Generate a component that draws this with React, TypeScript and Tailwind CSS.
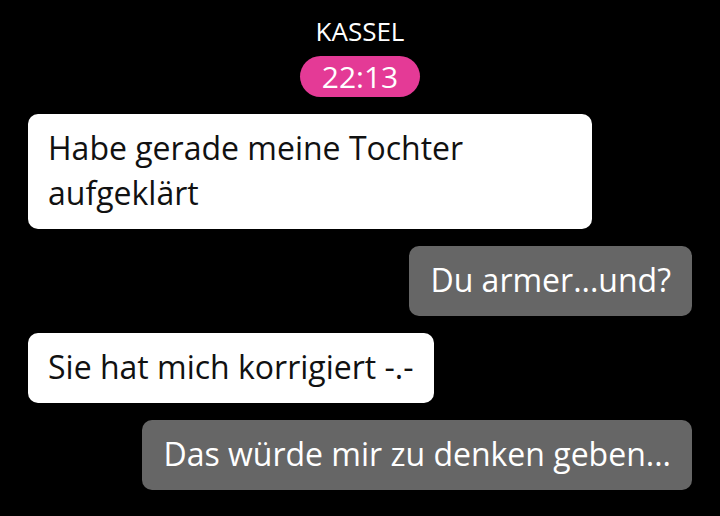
const messages = [
  { text: 'Habe gerade meine Tochter aufgeklärt', mine: false },
  { text: 'Du armer...und?', mine: true },
  { text: 'Sie hat mich korrigiert -.-', mine: false },
  { text: 'Das würde mir zu denken geben...', mine: true },
];

export default function App() {
  return (
    <div className="min-h-[516px] w-[720px] bg-black font-['Open_Sans',sans-serif] text-white">
      <div className="flex flex-col items-center pt-[15px]">
        <div className="text-[26px] leading-[32px]">KASSEL</div>
        <div className="mt-[9px] rounded-full bg-[#e43a96] px-[22px] text-[30px] leading-[41px]">22:13</div>
      </div>
      <div className="mt-[17px] flex flex-col gap-[17px] px-[28px]">
        {messages.map((m, i) => (
          <div key={i} className={m.mine ? 'flex justify-end' : 'flex justify-start'}>
            <div
              className={
                m.mine
                  ? 'max-w-[564px] rounded-[10px] bg-[#666666] px-[21px] pt-[11px] pb-[14px] text-[32px] leading-[45px] text-white'
                  : 'max-w-[564px] rounded-[10px] bg-white px-[20px] pt-[11px] pb-[14px] text-[32px] leading-[45px] text-[#111111]'
              }
            >
              {m.text}
            </div>
          </div>
        ))}
      </div>
    </div>
  );
}
